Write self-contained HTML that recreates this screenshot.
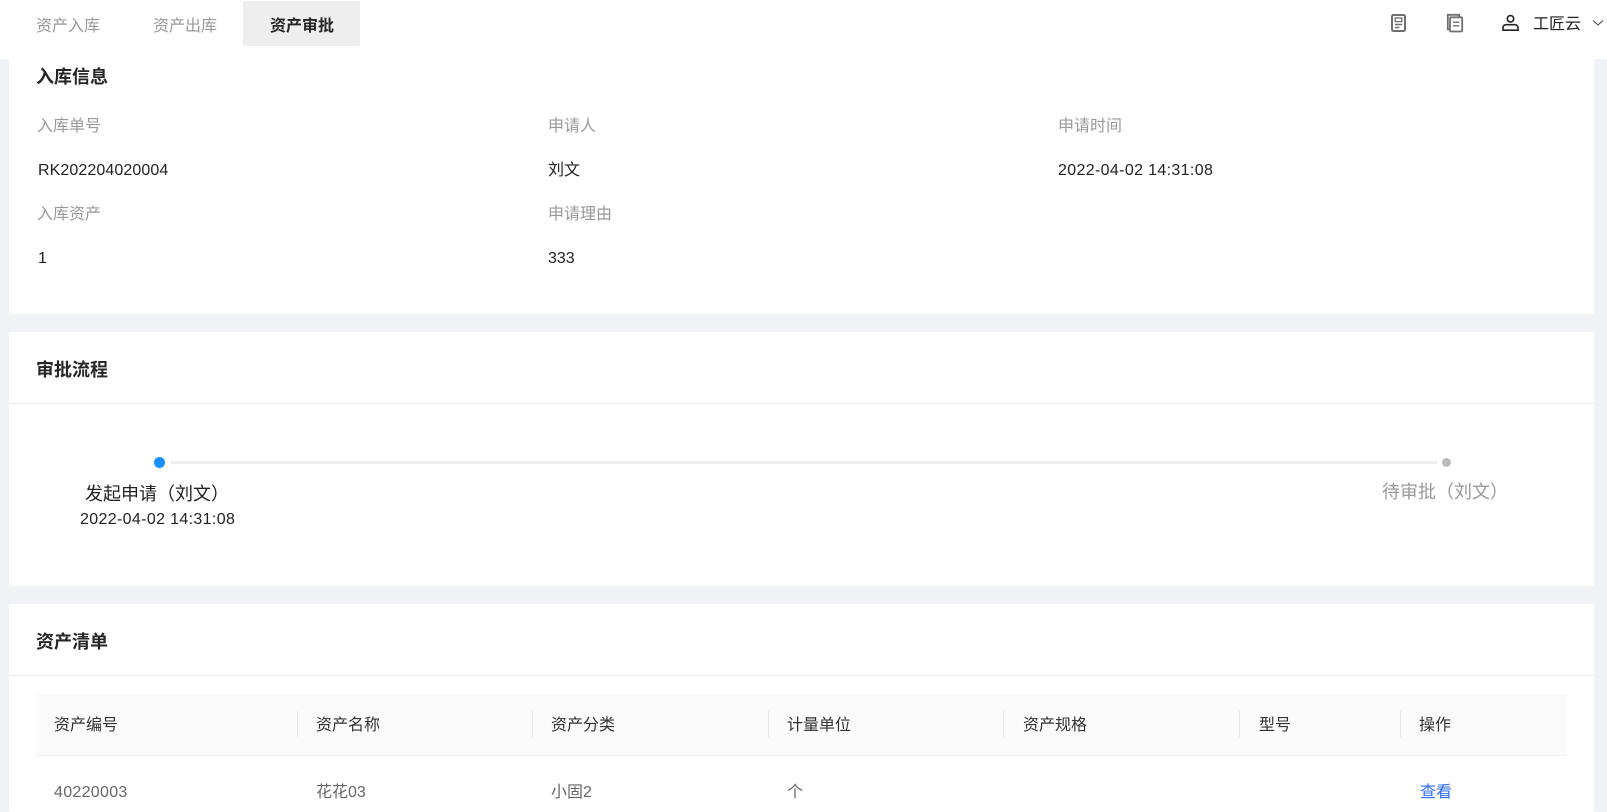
<!DOCTYPE html>
<html lang="zh">
<head>
<meta charset="utf-8">
<title>资产审批</title>
<style>
html,body{margin:0;padding:0;width:1607px;height:812px;overflow:hidden;background:#f0f2f5;}
body{position:relative;font-family:"Liberation Sans","Noto Sans CJK SC",sans-serif;}
.box{position:absolute;background:#fff;}
.t{position:absolute;line-height:24px;height:24px;white-space:nowrap;font-size:16px;color:#222;}
.g{color:#999;}
.h{font-size:18px;font-weight:700;color:#262626;}
.th{color:#333;}
.td{color:#666;}
.sep{position:absolute;top:711px;width:1px;height:26px;background:#e6e6e6;}
svg{position:absolute;}
</style>
</head>
<body>
<!-- cards -->
<div class="box" style="left:9px;top:50px;width:1585px;height:264px;border-radius:2px;"></div>
<div class="box" style="left:9px;top:332px;width:1585px;height:254px;border-radius:2px;"></div>
<div class="box" style="left:9px;top:604px;width:1585px;height:208px;border-radius:2px;"></div>

<!-- header -->
<div class="box" style="left:0;top:0;width:1607px;height:59px;"></div>
<div class="box" style="left:243px;top:1px;width:117px;height:45px;background:#eeeeee;border-radius:2px;"></div>
<div class="t g" style="left:36px;top:15px;">资产入库</div>
<div class="t g" style="left:153px;top:15px;">资产出库</div>
<div class="t" style="left:270px;top:15px;font-weight:700;color:#262626;">资产审批</div>

<svg style="left:1390px;top:13px" width="17" height="20" viewBox="0 0 17 20" fill="none" stroke="#707070" stroke-width="2">
  <rect x="2" y="2" width="13" height="16" rx="1.5"/>
  <rect x="5.2" y="5" width="6.6" height="3.6" stroke-width="1.3"/>
  <path d="M5 11.5h7M5 14.5h4.5" stroke-width="1.4"/>
</svg>
<svg style="left:1446px;top:13px" width="18" height="20" viewBox="0 0 18 20" fill="none" stroke="#707070" stroke-width="1.8">
  <path d="M3.5 16.5H1.8V1.8h11.4v2"/>
  <rect x="4" y="4.3" width="12.2" height="14.2" rx="1"/>
  <path d="M7 9.3h6.2M7 12.8h6.2" stroke-width="1.4"/>
</svg>
<svg style="left:1501px;top:14px" width="19" height="18" viewBox="0 0 19 18" fill="none" stroke="#222" stroke-width="1.6">
  <circle cx="9.5" cy="4.8" r="3.2"/>
  <path d="M2 16.2v-2.4c0-1.8 1.4-3.1 3.2-3.1h8.6c1.8 0 3.2 1.3 3.2 3.1v2.4z"/>
</svg>
<div class="t" style="left:1533px;top:13px;">工匠云</div>
<svg style="left:1592px;top:19px" width="12" height="8" viewBox="0 0 12 8" fill="none" stroke="#444" stroke-width="1">
  <path d="M1 1.5l5 4.5 5-4.5"/>
</svg>

<!-- card 1 -->
<div class="t h" style="left:36px;top:65px;">入库信息</div>
<div class="t g" style="left:37px;top:115px;">入库单号</div>
<div class="t g" style="left:548px;top:115px;">申请人</div>
<div class="t g" style="left:1058px;top:115px;">申请时间</div>
<div class="t" style="left:38px;top:159px;letter-spacing:.1px;">RK202204020004</div>
<div class="t" style="left:548px;top:159px;">刘文</div>
<div class="t" style="left:1058px;top:159px;letter-spacing:.35px;">2022-04-02 14:31:08</div>
<div class="t g" style="left:37px;top:203px;">入库资产</div>
<div class="t g" style="left:548px;top:203px;">申请理由</div>
<div class="t" style="left:38px;top:247px;">1</div>
<div class="t" style="left:548px;top:247px;">333</div>

<!-- card 2 -->
<div class="t h" style="left:36px;top:358px;">审批流程</div>
<div style="position:absolute;left:9px;top:403px;width:1585px;height:1px;background:#ececec;"></div>
<div style="position:absolute;left:171px;top:461px;width:1266px;height:3px;background:#eeeeee;"></div>
<div style="position:absolute;left:154px;top:457px;width:11px;height:11px;border-radius:50%;background:#1890ff;"></div>
<div style="position:absolute;left:1441.5px;top:457.5px;width:9px;height:9px;border-radius:50%;background:#bbbbbb;"></div>
<div class="t" style="left:85px;top:482px;font-size:18px;">发起申请（刘文）</div>
<div class="t" style="left:80px;top:508px;letter-spacing:.35px;">2022-04-02 14:31:08</div>
<div class="t g" style="left:1382px;top:480px;font-size:18px;">待审批（刘文）</div>

<!-- card 3 -->
<div class="t h" style="left:36px;top:630px;">资产清单</div>
<div style="position:absolute;left:9px;top:675px;width:1585px;height:1px;background:#ececec;"></div>
<div style="position:absolute;left:36px;top:694px;width:1531px;height:61px;background:#fafafa;border-bottom:1px solid #eeeeee;"></div>
<div class="sep" style="left:297px;"></div>
<div class="sep" style="left:532px;"></div>
<div class="sep" style="left:768px;"></div>
<div class="sep" style="left:1003px;"></div>
<div class="sep" style="left:1239px;"></div>
<div class="sep" style="left:1400px;"></div>
<div class="t th" style="left:54px;top:714px;">资产编号</div>
<div class="t th" style="left:316px;top:714px;">资产名称</div>
<div class="t th" style="left:551px;top:714px;">资产分类</div>
<div class="t th" style="left:787px;top:714px;">计量单位</div>
<div class="t th" style="left:1023px;top:714px;">资产规格</div>
<div class="t th" style="left:1259px;top:714px;">型号</div>
<div class="t th" style="left:1419px;top:714px;">操作</div>
<div class="t td" style="left:54px;top:781px;letter-spacing:.3px;">40220003</div>
<div class="t td" style="left:316px;top:781px;">花花03</div>
<div class="t td" style="left:551px;top:781px;">小固2</div>
<div class="t td" style="left:787px;top:781px;">个</div>
<div class="t" style="left:1420px;top:781px;color:#2b6af5;">查看</div>
</body>
</html>
